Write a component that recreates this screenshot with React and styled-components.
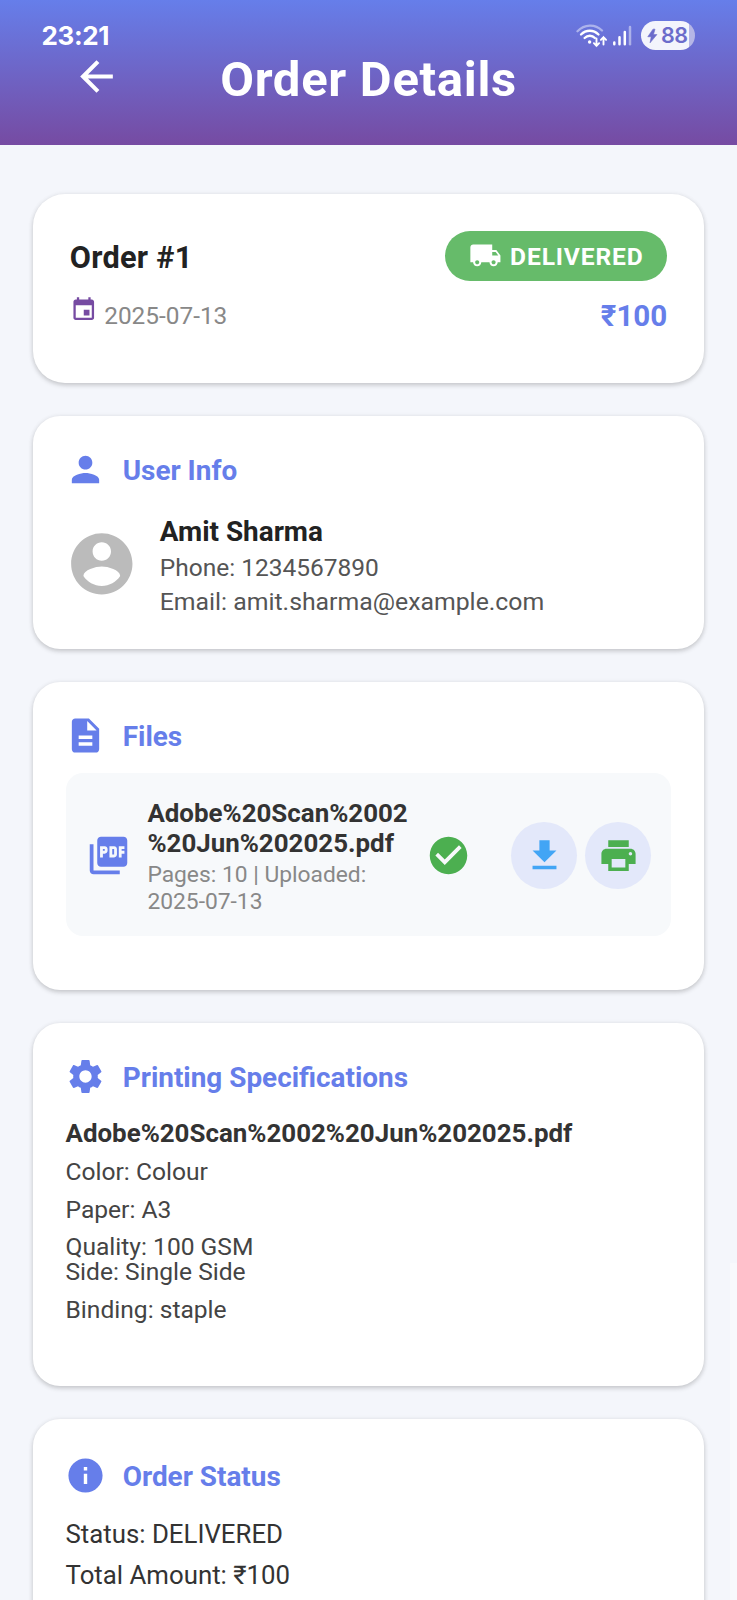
import React from 'react';
import styled, { createGlobalStyle } from 'styled-components';
import {
  MdArrowBack, MdLocalShipping, MdPerson, MdDescription,
  MdPictureAsPdf, MdCheckCircle, MdGetApp, MdSettings, MdInfo,
} from 'react-icons/md';

const Global = createGlobalStyle`
  *, *::before, *::after { box-sizing: border-box; }
  html, body { margin: 0; height: 1600px; overflow: hidden; background: #f4f6fb; }
  body { font-family: Roboto, "Liberation Sans", sans-serif; }
  svg { display: block; flex: none; }
`;

const Screen = styled.div`
  position: relative;
  width: 737px;
  height: 1600px;
  overflow: hidden;
  background: #f4f6fb;
`;

const Header = styled.header`
  height: 144.5px;
  background: linear-gradient(180deg, #667eea 0%, #764ba2 100%);
  color: #fff;
`;

const StatusBar = styled.div`
  display: flex;
  align-items: center;
  justify-content: space-between;
  height: 50px;
  padding: 21px 42px 0 41.5px;
`;

const Clock = styled.span`
  font: 700 26px/29px Inter, sans-serif;
  letter-spacing: -0.35px;
`;

const StatusIcons = styled.div`
  display: flex;
  align-items: center;
`;

const Battery = styled.div`
  display: flex;
  align-items: center;
  gap: 3.5px;
  width: 54px;
  height: 29px;
  margin-left: 9.5px;
  padding-left: 6px;
  border-radius: 15px;
  background: linear-gradient(90deg, #f3f4fc 0 48px, #b5b6e6 48px);
  color: #6b6ccb;
  font: 600 21.5px/29px Inter, sans-serif;
  letter-spacing: -0.5px;
`;

const TitleBar = styled.div`
  display: flex;
  align-items: flex-start;
  height: 58px;
  padding: 1.8px 0 0 72.2px;
`;

const Title = styled.h1`
  margin: -1.2px 0 0 99px;
  font-size: 49px;
  font-weight: 700;
  line-height: 58px;
  letter-spacing: 0.7px;
  white-space: nowrap;
`;

const Content = styled.main`
  display: flex;
  flex-direction: column;
  gap: 33px;
  padding: 49.2px 33px 0;
`;

const Card = styled.section`
  flex: none;
  height: ${p => p.$height}px;
  padding: ${p => p.$pad || '33px 33px 0 32.5px'};
  border-radius: ${p => p.$radius || 27}px;
  background: #fff;
  box-shadow: 0 2px 5px rgba(0, 0, 0, 0.2), 0 0 6px rgba(0, 0, 0, 0.03);
`;

const SplitRow = styled.div`
  display: flex;
  justify-content: space-between;
  align-items: flex-start;
`;

const OrderNumber = styled.h2`
  margin: 8px 0 0;
  font-size: 30.7px;
  line-height: 38px;
  font-weight: 700;
  letter-spacing: 0.3px;
  color: #222;
`;

const Badge = styled.span`
  display: flex;
  align-items: center;
  gap: 8px;
  width: 222.3px;
  height: 50px;
  padding-left: 24.3px;
  border-radius: 25px;
  background: #66bb6a;
  color: #fff;
  font-size: 24.6px;
  font-weight: 700;
  letter-spacing: 0.85px;
`;

const BadgeLabel = styled.span`
  padding-top: 2.5px;
`;

const DateLabel = styled.span`
  display: flex;
  gap: 7px;
  margin-top: 15.5px;
  color: #764ba2;
  font-size: 24.4px;
`;

const DateText = styled.span`
  padding-top: 5.5px;
  line-height: 28px;
  color: #888;
`;

const Amount = styled.span`
  margin-top: 18.2px;
  font-size: 29.6px;
  line-height: 34px;
  font-weight: 700;
  color: #667eea;
`;

const SectionHead = styled.div`
  display: flex;
  align-items: center;
  gap: 16.6px;
  height: 41px;
  margin-left: -0.4px;
  color: #667eea;
`;

const SectionTitle = styled.h3`
  margin: 0;
  padding-top: 4px;
  font-size: 27.9px;
  font-weight: 700;
  line-height: 36px;
`;

const UserRow = styled.div`
  display: flex;
  align-items: center;
  gap: 21px;
  margin: 19.3px 0 0 -0.4px;
  color: #bbb;
`;

const UserText = styled.div`
  padding-top: 6.5px;
`;

const UserName = styled.div`
  margin-bottom: 1.6px;
  font-size: 27.9px;
  font-weight: 700;
  line-height: 34px;
  color: #222;
`;

const UserDetail = styled.div`
  font-size: ${p => p.$size}px;
  line-height: 34px;
  color: #555;
`;

const FileBox = styled.div`
  display: flex;
  align-items: center;
  height: 163px;
  margin-top: 17.5px;
  padding: 1px 20px 0 20.5px;
  border-radius: 17px;
  background: #f7f9fb;
  color: #667eea;
`;

const FileText = styled.div`
  width: 262px;
  margin: 3.6px 16.4px 0;
`;

const FileName = styled.div`
  margin-bottom: 3.5px;
  font-size: 25.9px;
  font-weight: 700;
  line-height: 30.3px;
  color: #333;
  word-break: break-all;
`;

const FileMeta = styled.div`
  font-size: 22.8px;
  line-height: 26.9px;
  color: #888;
`;

const FileActions = styled.div`
  display: flex;
  gap: 8.4px;
  margin-left: auto;
`;

const RoundButton = styled.button`
  display: grid;
  place-items: center;
  width: 65.6px;
  height: 67px;
  padding: 0;
  border: 0;
  border-radius: 50%;
  background: #e3e8fa;
  color: ${p => p.$color};
`;

const SpecTitle = styled.div`
  margin-top: 20px;
  font-size: 25.9px;
  font-weight: 700;
  line-height: 32px;
  color: #333;
`;

const SpecLine = styled.div`
  margin-top: ${p => p.$gap}px;
  font-size: 24.6px;
  line-height: 24px;
  color: #444;
`;

const StatusLine = styled.div`
  margin-top: ${p => p.$gap}px;
  font-size: 25.8px;
  line-height: 30px;
  color: #333;
`;

const ScrollThumb = styled.div`
  position: absolute;
  right: 0;
  top: 1263px;
  width: 7px;
  height: 337px;
  background: rgba(255, 255, 255, 0.4);
`;

function WifiIcon() {
  return (
    <svg width="32" height="26" viewBox="0 0 32 26" fill="none" stroke="#fff" strokeWidth="2.3" strokeLinecap="round">
      <path d="M1.5 8.2C8.5 1 19 .7 26 7.5" opacity=".45" />
      <path d="M5 11.5c5-5 12.5-5 17.5 0M8.6 15c3-3 7.5-3 10.3 0" />
      <circle cx="13.6" cy="19" r="1.7" fill="#fff" stroke="none" />
      <path d="M20.5 15.5v7.2m-2.6-2.5 2.6 2.6 2.6-2.6M27.5 21.5v-7.2m-2.6 2.5 2.6-2.6 2.6 2.6" strokeWidth="1.9" />
    </svg>
  );
}

const Signal = styled.svg`
  margin-left: 4px;
`;

function SignalIcon() {
  return (
    <Signal width="20" height="22" viewBox="0 0 20 22" fill="none" stroke="#fff" strokeWidth="2.5" strokeLinecap="round">
      <path d="M2.3 17.5v1.8M7.5 12.3v7M12.8 7v12.3" />
      <path d="M18 2v17.3" opacity=".45" />
    </Signal>
  );
}

function BoltIcon() {
  return (
    <svg width="10.5" height="16" viewBox="0 0 11 16" fill="currentColor" stroke="currentColor" strokeWidth=".6" strokeLinejoin="round">
      <path d="M6.3.8.8 8.8h3.6L3.2 15.2 10.4 6.5H6.8L8.4.8z" />
    </svg>
  );
}

const Glyph = ({ size, d }) => (
  <svg width={size} height={size} viewBox="0 0 24 24" fill="currentColor"><path d={d} /></svg>
);

const CALENDAR = 'M17 12h-5v5h5v-5zM16 1v2H8V1H6v2H5c-1.11 0-1.99.9-1.99 2L3 19c0 1.1.89 2 2 2h14c1.1 0 2-.9 2-2V5c0-1.1-.9-2-2-2h-1V1h-2zm3 18H5V8h14v11z';
const AVATAR = 'M12 2C6.48 2 2 6.48 2 12s4.48 10 10 10 10-4.48 10-10S17.52 2 12 2zm0 3c1.66 0 3 1.34 3 3s-1.34 3-3 3-3-1.34-3-3 1.34-3 3-3zm0 14.2c-2.5 0-4.71-1.28-6-3.22.03-1.99 4-3.08 6-3.08 1.99 0 5.97 1.09 6 3.08-1.29 1.94-3.5 3.22-6 3.22z';
const PRINTER = 'M19 8H5c-1.66 0-3 1.34-3 3v6h4v4h12v-4h4v-6c0-1.66-1.34-3-3-3zm-3 11H8v-5h8v5zm3-7c-.55 0-1-.45-1-1s.45-1 1-1 1 .45 1 1-.45 1-1 1zm-1-9H6v4h12V3z';

function Section({ icon: Icon, title, height, pad, children }) {
  return (
    <Card $height={height} $pad={pad}>
      <SectionHead>
        <Icon size={41} />
        <SectionTitle>{title}</SectionTitle>
      </SectionHead>
      {children}
    </Card>
  );
}

export default function App() {
  return (
    <Screen>
      <Global />
      <Header>
        <StatusBar>
          <Clock>23:21</Clock>
          <StatusIcons>
            <WifiIcon />
            <SignalIcon />
            <Battery><BoltIcon /><span>88</span></Battery>
          </StatusIcons>
        </StatusBar>
        <TitleBar>
          <MdArrowBack size={49} />
          <Title>Order Details</Title>
        </TitleBar>
      </Header>
      <Content>
        <Card $height={189} $radius={32} $pad="37px 36.7px 0">
          <SplitRow>
            <OrderNumber>Order #1</OrderNumber>
            <Badge><MdLocalShipping size={32.8} /><BadgeLabel>DELIVERED</BadgeLabel></Badge>
          </SplitRow>
          <SplitRow>
            <DateLabel><Glyph size={27.5} d={CALENDAR} /><DateText>2025-07-13</DateText></DateLabel>
            <Amount>₹100</Amount>
          </SplitRow>
        </Card>
        <Section icon={MdPerson} title="User Info" height={233}>
          <UserRow>
            <Glyph size={73.6} d={AVATAR} />
            <UserText>
              <UserName>Amit Sharma</UserName>
              <UserDetail $size={24.5}>Phone: 1234567890</UserDetail>
              <UserDetail $size={24.8}>Email: amit.sharma@example.com</UserDetail>
            </UserText>
          </UserRow>
        </Section>
        <Section icon={MdDescription} title="Files" height={308}>
          <FileBox>
            <MdPictureAsPdf size={45} />
            <FileText>
              <FileName>Adobe%20Scan%2002<br />%20Jun%202025.pdf</FileName>
              <FileMeta>Pages: 10 | Uploaded:<br />2025-07-13</FileMeta>
            </FileText>
            <MdCheckCircle size={45} color="#4caf50" />
            <FileActions>
              <RoundButton $color="#42a5f5"><MdGetApp size={41} /></RoundButton>
              <RoundButton $color="#4caf50"><Glyph size={41} d={PRINTER} /></RoundButton>
            </FileActions>
          </FileBox>
        </Section>
        <Section icon={MdSettings} title="Printing Specifications" height={363.2}>
          <SpecTitle>Adobe%20Scan%2002%20Jun%202025.pdf</SpecTitle>
          <SpecLine $gap={11.4}>Color: Colour</SpecLine>
          <SpecLine $gap={13.7}>Paper: A3</SpecLine>
          <SpecLine $gap={13.3}>Quality: 100 GSM</SpecLine>
          <SpecLine $gap={0.7}>Side: Single Side</SpecLine>
          <SpecLine $gap={14.5}>Binding: staple</SpecLine>
        </Section>
        <Section icon={MdInfo} title="Order Status" height={240} pad="36px 33px 0 32.5px">
          <StatusLine $gap={23.2}>Status: DELIVERED</StatusLine>
          <StatusLine $gap={10.9}>Total Amount: ₹100</StatusLine>
        </Section>
      </Content>
      <ScrollThumb />
    </Screen>
  );
}
